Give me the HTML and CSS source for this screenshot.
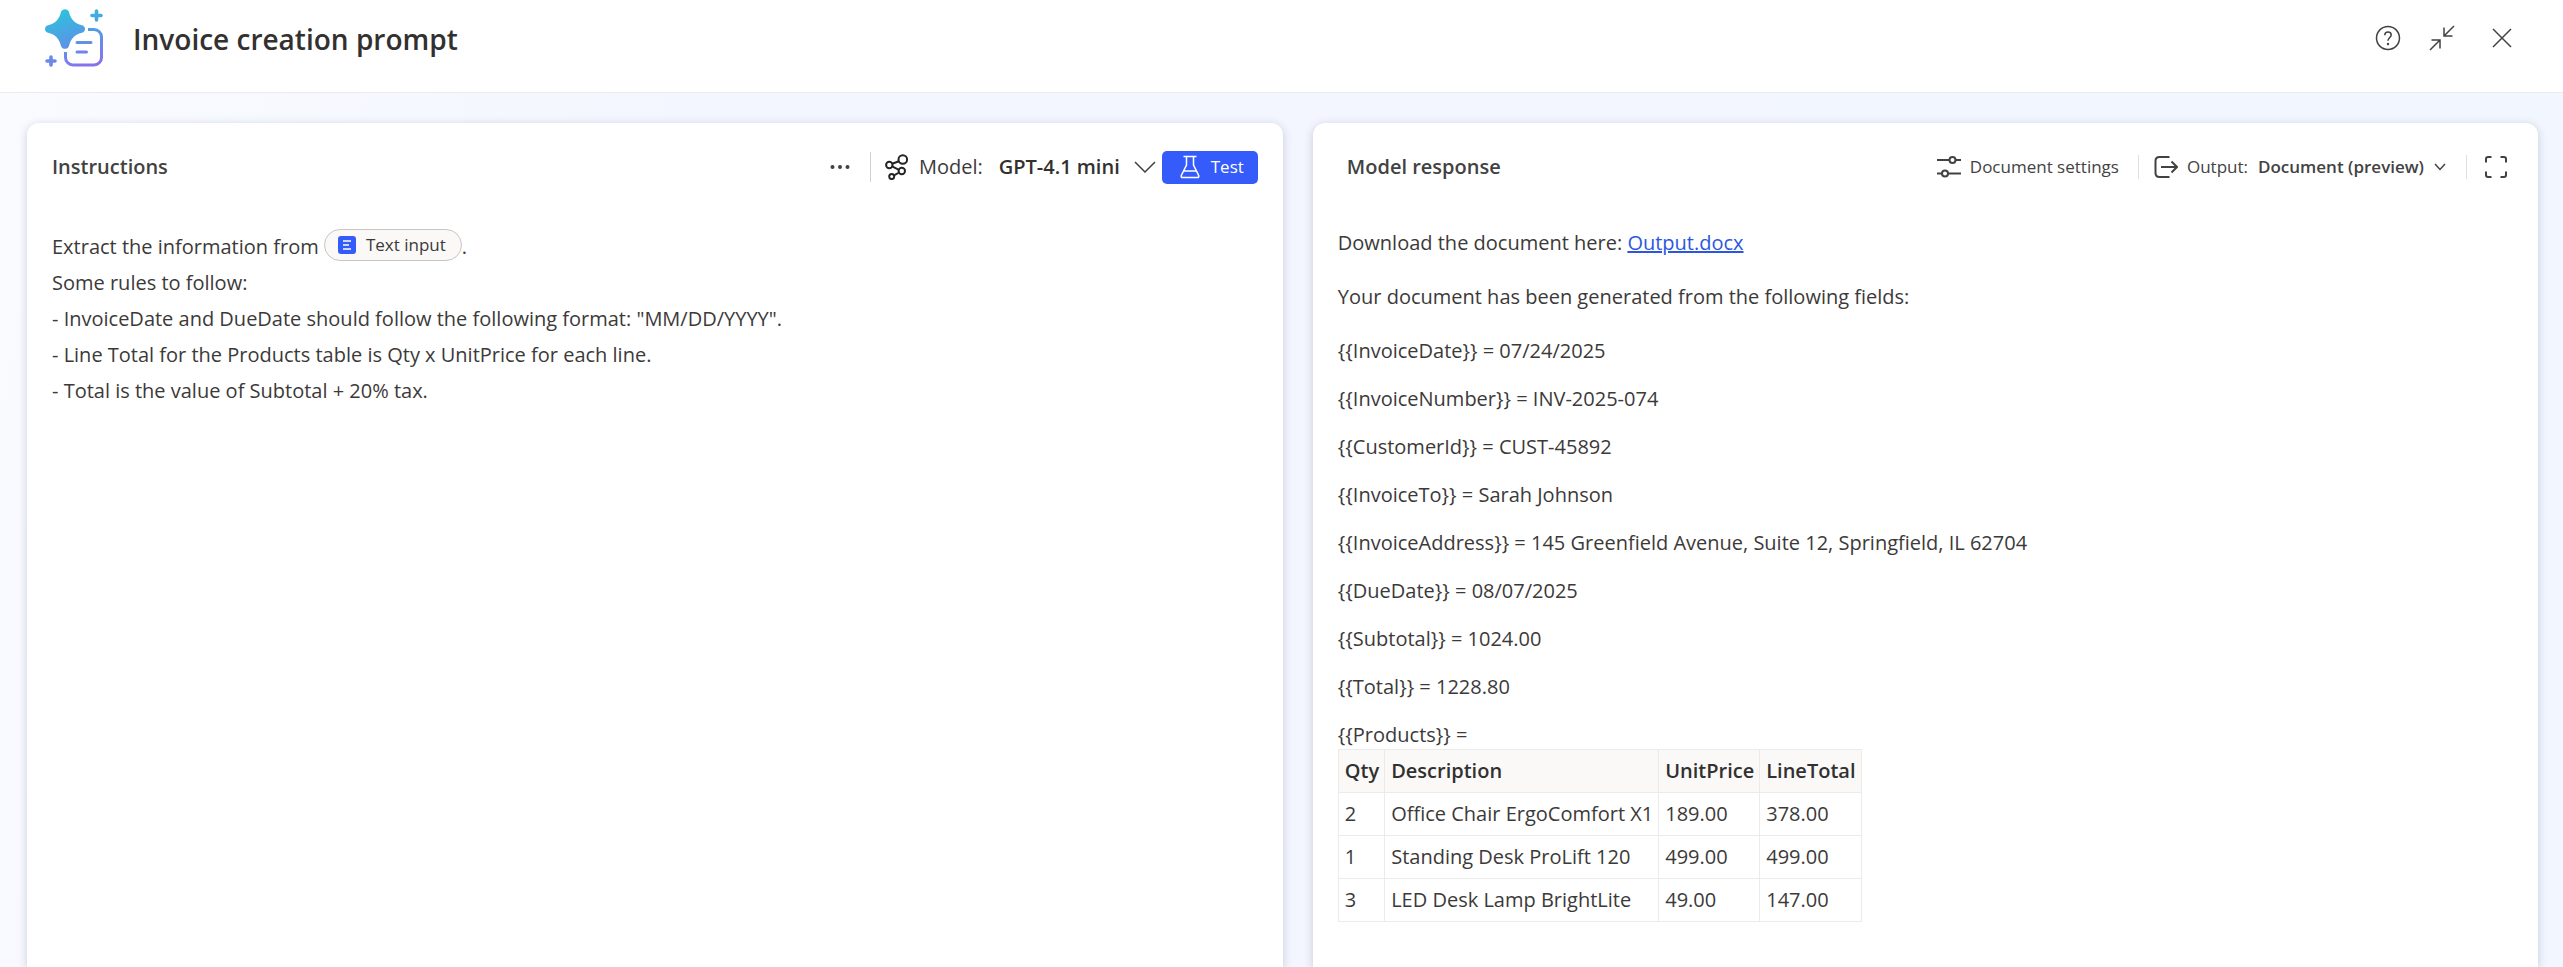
FILE: index.html
```
<!DOCTYPE html>
<html lang="en">
<head>
<meta charset="utf-8">
<title>Invoice creation prompt</title>
<link rel="stylesheet" href="styles.css">
</head>
<body>
<header class="topbar">
  <svg class="logo" width="60" height="60" viewBox="0 0 60 60" fill="none" aria-hidden="true">
    <defs>
      <linearGradient id="brand" gradientUnits="userSpaceOnUse" x1="18" y1="0" x2="40" y2="60">
        <stop offset="0" stop-color="#2bc4da"/>
        <stop offset="0.5" stop-color="#549be6"/>
        <stop offset="1" stop-color="#8a70ec"/>
      </linearGradient>
    </defs>
    <path fill="url(#brand)" d="M17 4C18.200 0.200 23.800 0.200 25 4C27 11.500 30.500 15.500 38 17.200C42 18.300 42 23.700 38 24.800C30.500 26.500 27 30.500 25 38C23.800 41.800 18.200 41.800 17 38C15 30.500 11.500 26.500 4 24.800C0 23.700 0 18.300 4 17.200C11.500 15.500 15 11.500 17 4Z"/>
    <g stroke="url(#brand)" stroke-width="3">
      <path d="M44 21.500H50A7.500 7.500 0 0 1 57.500 29V49.500A7.500 7.500 0 0 1 50 57H29A7.500 7.500 0 0 1 21.500 49.500V44"/>
      <path stroke-linecap="round" d="M33 34.600H47M33 44.100L42.500 44.101"/>
      <path stroke-linecap="round" stroke-width="3.600" d="M48 7.500L57 7.501M52.500 3L52.501 12M3 53L11 53.001M7 49L7.001 57"/>
    </g>
  </svg>
  <h1 class="title">Invoice creation prompt</h1>
  <div class="window-actions">
    <button class="icon-button" type="button" aria-label="Help">
      <svg width="26" height="26" viewBox="0 0 26 26"><circle cx="13" cy="13" r="11.500"/><path d="M9.800 10.200C9.800 8.200 11.200 7 13 7S16.200 8.200 16.200 10C16.200 12.300 13 12.700 13 15.700"/><circle class="solid" cx="13" cy="19" r="1.200"/></svg>
    </button>
    <button class="icon-button" type="button" aria-label="Exit full size">
      <svg width="26" height="26" viewBox="0 0 26 26"><path d="M25 1L15 11M15 2.500V11H23.500M1 25L11 15M2.500 15H11V23.500"/></svg>
    </button>
    <button class="icon-button close" type="button" aria-label="Close">
      <svg width="26" height="26" viewBox="0 0 26 26"><path d="M4 4L22 22M22 4L4 22"/></svg>
    </button>
  </div>
</header>

<main class="workspace">
  <section class="panel">
    <div class="panel-head">
      <h2 class="panel-title">Instructions</h2>
      <div class="tools">
        <button class="icon-button more" type="button" aria-label="More options">
          <svg width="20" height="20" viewBox="0 0 20 20"><circle class="solid" cx="2.500" cy="10" r="2"/><circle class="solid" cx="10" cy="10" r="2"/><circle class="solid" cx="17.500" cy="10" r="2"/></svg>
        </button>
        <span class="rule tall"></span>
        <button class="picker" type="button">
          <svg class="dark" width="24" height="26" viewBox="0 0 24 26"><circle cx="17.800" cy="5.500" r="4.300"/><circle cx="4.300" cy="11" r="3.200"/><circle cx="16.800" cy="17" r="3.200"/><circle cx="6.700" cy="22.600" r="2.500"/><path d="M7.300 9.800L13.800 7.200M7.200 12.400L13.900 15.800M14.200 18.500L9 21.400"/></svg>
          <span class="picker-label">Model:</span>
          <strong class="picker-value">GPT-4.1 mini</strong>
          <svg class="thin" width="22" height="12" viewBox="0 0 22 12"><path d="M1 1L11 11L21 1"/></svg>
        </button>
        <button class="test" type="button">
          <svg width="20" height="24" viewBox="0 0 20 24"><path d="M3.500 1.500H16.500M6.500 1.500V10L1.300 20.500Q0.800 22.500 2.500 22.500H17.500Q19.200 22.500 18.700 20.500L13.500 10V1.500M3.500 16H16.500"/></svg>
          Test
        </button>
      </div>
    </div>
    <div class="instructions">
      <p>Extract the information from <span class="chip"><svg width="18" height="18" viewBox="0 0 18 18"><rect width="18" height="18" rx="3" fill="#355cfb"/><path d="M5 5H13M5 9H11M5 13H13" stroke="#fff" stroke-width="1.500"/></svg>Text input</span>.</p>
      <p>Some rules to follow:</p>
      <p>- InvoiceDate and DueDate should follow the following format: "MM/DD/YYYY".</p>
      <p>- Line Total for the Products table is Qty x UnitPrice for each line.</p>
      <p>- Total is the value of Subtotal + 20% tax.</p>
    </div>
  </section>

  <section class="panel">
    <div class="panel-head response-head">
      <h2 class="panel-title">Model response</h2>
      <div class="tools">
        <button class="picker small" type="button">
          <svg width="24" height="24" viewBox="0 0 24 24"><circle cx="15.500" cy="5" r="3"/><path d="M0 5H12.500M18.500 5H24M0 18.500H5M11 18.500H24"/><circle cx="8" cy="18.500" r="3"/></svg>
          <span class="picker-label">Document settings</span>
        </button>
        <span class="rule"></span>
        <button class="picker small" type="button">
          <svg width="24" height="24" viewBox="0 0 24 24"><path d="M15.500 2H5.500Q1.500 2 1.500 6V18Q1.500 22 5.500 22H15.500M7 12H23M17.500 6.500L23 12L17.500 17.500"/></svg>
          <span class="picker-label">Output:</span>
          <strong class="picker-value">Document (preview)</strong>
          <svg class="thin" width="12" height="8" viewBox="0 0 12 8"><path d="M1 1L6 6.500L11 1"/></svg>
        </button>
        <span class="rule"></span>
        <button class="icon-button expand" type="button" aria-label="Full screen">
          <svg width="24" height="24" viewBox="0 0 24 24"><path d="M7.500 2H4Q2 2 2 4V7.500M16.500 2H20Q22 2 22 4V7.500M7.500 22H4Q2 22 2 20V16.500M16.500 22H20Q22 22 22 20V16.500"/></svg>
        </button>
      </div>
    </div>
    <div class="response">
      <p class="lead">Download the document here: <a href="#">Output.docx</a></p>
      <p class="lead">Your document has been generated from the following fields:</p>
      <p>{{InvoiceDate}} = 07/24/2025</p>
      <p>{{InvoiceNumber}} = INV-2025-074</p>
      <p>{{CustomerId}} = CUST-45892</p>
      <p>{{InvoiceTo}} = Sarah Johnson</p>
      <p>{{InvoiceAddress}} = 145 Greenfield Avenue, Suite 12, Springfield, IL 62704</p>
      <p>{{DueDate}} = 08/07/2025</p>
      <p>{{Subtotal}} = 1024.00</p>
      <p>{{Total}} = 1228.80</p>
      <p class="tight">{{Products}} =</p>
      <table class="products">
        <thead><tr><th>Qty</th><th>Description</th><th>UnitPrice</th><th>LineTotal</th></tr></thead>
        <tbody>
          <tr><td>2</td><td>Office Chair ErgoComfort X1</td><td>189.00</td><td>378.00</td></tr>
          <tr><td>1</td><td>Standing Desk ProLift 120</td><td>499.00</td><td>499.00</td></tr>
          <tr><td>3</td><td>LED Desk Lamp BrightLite</td><td>49.00</td><td>147.00</td></tr>
        </tbody>
      </table>
    </div>
  </section>
</main>
</body>
</html>
```
FILE: styles.css
```
* { box-sizing: border-box; }
body {
  margin: 0;
  min-height: 100vh;
  display: flex;
  flex-direction: column;
  font-family: "Open Sans", "Noto Sans", sans-serif;
  font-size: 20px;
  line-height: 28px;
  color: #3b3a39;
  background: #fff;
}
h1, h2, p { margin: 0; }
button {
  font: inherit;
  color: inherit;
  background: none;
  border: 0;
  padding: 0;
  cursor: pointer;
}
svg { flex: none; }
button svg { fill: none; stroke: #424242; stroke-width: 2; }
button svg.dark { stroke: #242424; }
button svg.thin { stroke-width: 1.5; }
button svg .solid { fill: #424242; stroke: none; }

.topbar {
  display: flex;
  align-items: center;
  padding: 0 48px 16px 44px;
  height: 93px;
  border-bottom: 1px solid #edebe9;
}
.title {
  margin-left: 29px;
  padding-top: 2px;
  font-size: 28px;
  line-height: 40px;
  font-weight: 600;
  color: #323130;
}
.window-actions { display: flex; margin-left: auto; gap: 28px; }
.window-actions svg { stroke-width: 1.5; }
.window-actions .close { margin-left: 6px; }
.icon-button { display: flex; align-items: center; }

.workspace {
  flex: 1;
  display: grid;
  grid-template-columns: 41fr 40fr;
  gap: 30px;
  padding: 30px 25px 0 27px;
  background: linear-gradient(100deg, #f9fbff 0%, #f3f6fe 25%, #f2f6fe 100%);
}
.panel {
  background: #fff;
  border-radius: 12px 12px 0 0;
  box-shadow: 0 2px 10px rgba(40, 50, 90, 0.22);
}
.panel-head {
  display: flex;
  align-items: center;
  justify-content: space-between;
  height: 88px;
  padding: 0 25px;
}
.panel-title { font-size: 20px; font-weight: 600; color: #424242; }
.tools { display: flex; align-items: center; }
.rule { width: 1px; height: 24px; background: #e1dfdd; }
.rule.tall { height: 30px; background: #d2d0ce; }
.more { margin-right: 20px; }
.picker { display: flex; align-items: center; white-space: nowrap; }
.picker-label { margin: 0 16px 0 10px; }
.picker-value { font-weight: 600; color: #323130; margin-right: 14px; }
.tall + .picker { margin-left: 14px; }
.small { font-size: 17px; color: #424242; }
.small .picker-label { margin: 0 10px 0 9px; }
.small .picker-value { color: #424242; margin-right: 10px; }
.small:first-child .picker-label { margin-right: 19px; }
.rule + .small { margin: 0 20px 0 15px; }
.response-head { padding: 0 30px 0 34px; }
.expand { margin-left: 17px; }
.test {
  display: flex;
  align-items: center;
  gap: 11px;
  height: 33px;
  margin-left: 6px;
  padding: 0 14px 0 18px;
  border-radius: 5px;
  background: #355cfb;
  color: #fff;
  font-size: 17px;
}
.test svg { stroke: #fff; stroke-width: 1.5; }

.instructions { padding: 18px 25px; line-height: 36px; }
.chip {
  display: inline-flex;
  align-items: center;
  gap: 10px;
  height: 32px;
  padding: 0 15px 0 13px;
  border: 1px solid #c8c6c4;
  border-radius: 16px;
  background: #faf9f8;
  font-size: 17px;
}

.response { padding: 18px 25px; }
.response p { margin-bottom: 20px; }
.response .lead { margin-bottom: 26px; }
.response .tight { margin-bottom: 0; }
.response a { color: #2b57e0; text-decoration-thickness: 2px; }
.products { border-collapse: collapse; }
.products th, .products td {
  height: 43px;
  padding: 0 5px 0 6px;
  border: 1px solid #edebe9;
  text-align: left;
  white-space: nowrap;
}
.products th { font-weight: 600; background: #faf9f8; color: #323130; }
```
